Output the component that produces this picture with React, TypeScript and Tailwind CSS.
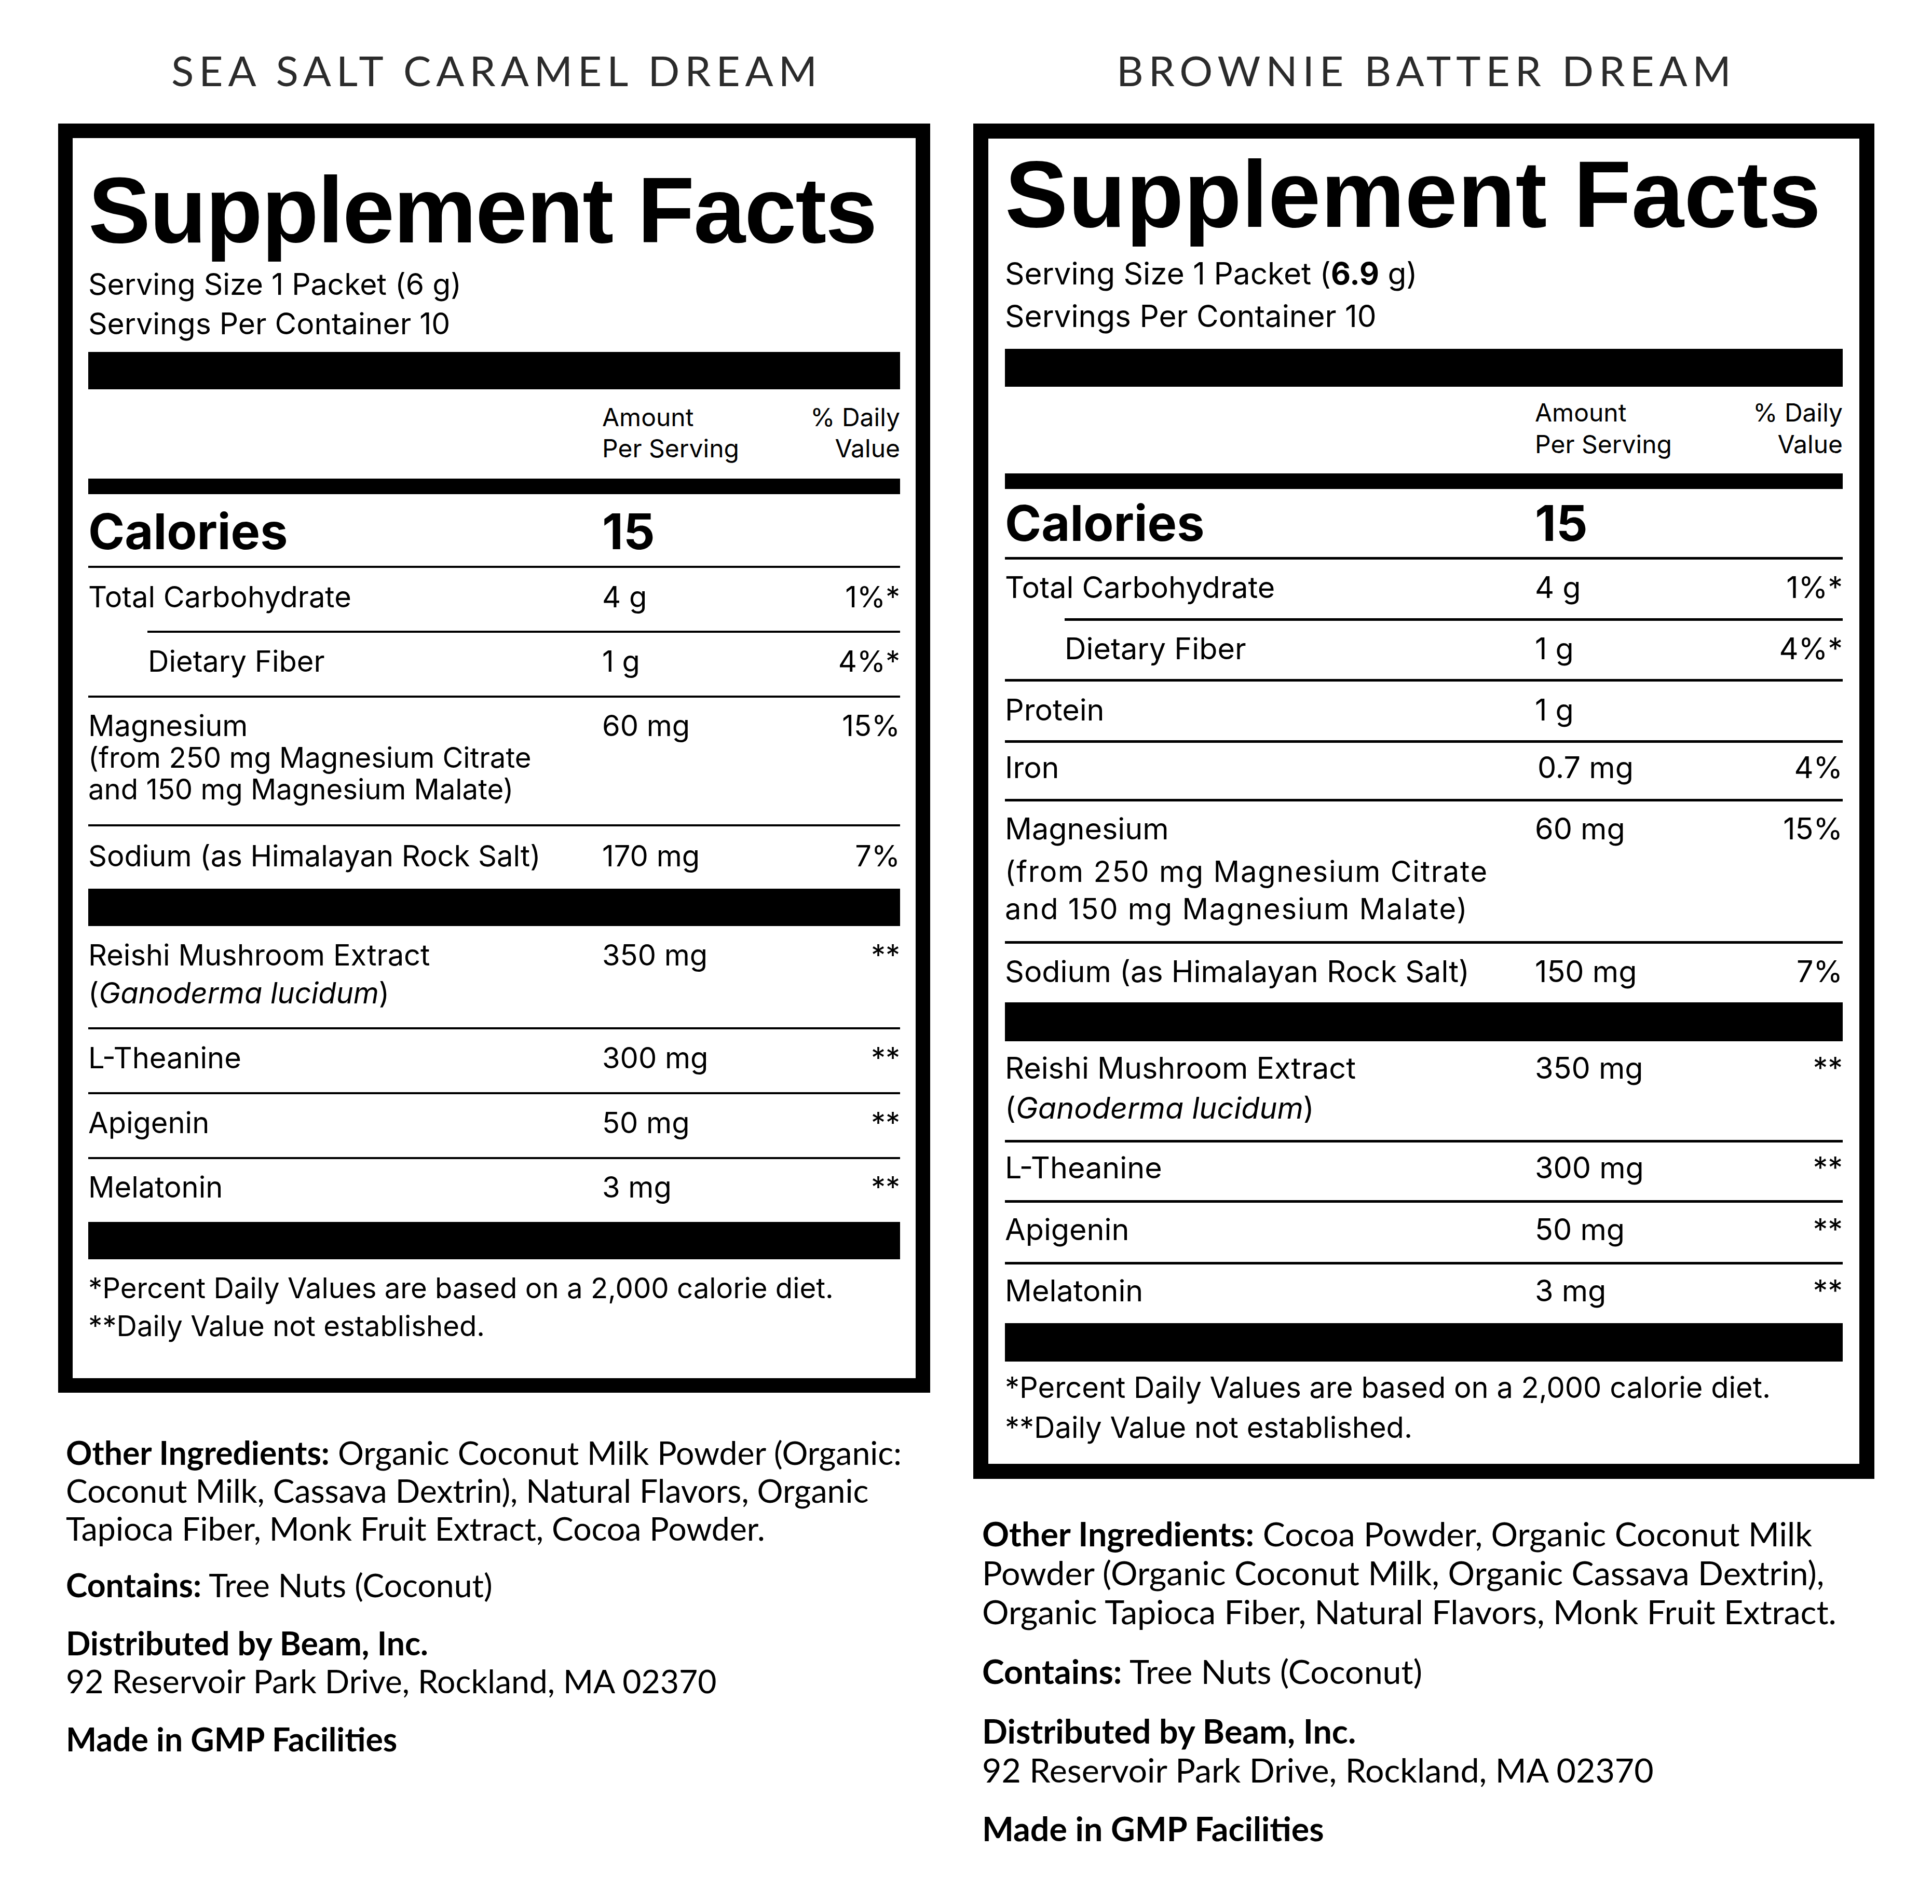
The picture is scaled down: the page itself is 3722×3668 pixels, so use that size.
import type { ReactNode } from "react";

interface RowProps {
    cols: string;
    pad: string;
    lead?: string;
    label: ReactNode;
    amount?: ReactNode;
    dv?: ReactNode;
    indent?: string;
}

const Row = ({ cols, pad, lead = "leading-[60px]", label, amount, dv, indent = "" }: RowProps) => {
    return (
        <div className={`grid ${cols} ${pad} ${lead}`}>
            <div className={indent}>{label}</div>
            <div>{amount}</div>
            <div className="text-right">{dv}</div>
        </div>
    );
};

const Title = ({ children }: { children: ReactNode }) => (
    <h1 className="pl-[10px] text-center font-['Lato',sans-serif] text-[80px] leading-[80px] tracking-[10px] text-[#2b2b2b]">
        {children}
    </h1>
);

// left panel: Sea Salt Caramel
const CaramelLabel = () => {
    const cols = "grid-cols-[990px_1fr_auto]";

    return (
        <div className="w-[1680px] border-[28px] border-black bg-white px-[30px] pt-[49px] pb-[64px] font-['Inter',sans-serif] text-[56px] text-black">
            <h2 className="font-['Liberation_Sans',Arial,sans-serif] text-[180px] leading-[180px] tracking-[-2px] font-bold">
                Supplement Facts
            </h2>
            <div className="mt-[15px] text-[57px] leading-[76px]">
                <p>Serving Size 1 Packet (6 g)</p>
                <p>Servings Per Container 10</p>
            </div>
            <div className="mt-[16px] h-[72px] bg-black" />
            <div className={`grid ${cols} pt-[24px] pb-[28px] text-[48px] leading-[60px]`}>
                <div />
                <div>Amount<br />Per Serving</div>
                <div className="text-right">% Daily<br />Value</div>
            </div>
            <div className="h-[30px] bg-black" />
            <div className={`grid ${cols} pt-[25px] pb-[19px] text-[95px] leading-[94px] font-bold`}>
                <div>Calories</div>
                <div>15</div>
                <div />
            </div>
            <div className="h-[4px] bg-black" />
            <Row cols={cols} pad="pt-[26px] pb-[35px]" label="Total Carbohydrate" amount="4 g" dv="1%*" />
            <div className="ml-[114px] h-[4px] bg-black" />
            <Row cols={cols} pad="pt-[25px] pb-[36px]" indent="pl-[115px]" label="Dietary Fiber" amount="1 g" dv="4%*" />
            <div className="h-[4px] bg-black" />
            <Row
                cols={cols}
                pad="pt-[24px] pb-[37px]"
                lead="leading-[61px]"
                label={
                    <>
                        Magnesium<br />
                        <span className="text-[54.5px]">(from 250 mg Magnesium Citrate<br />and 150 mg Magnesium Malate)</span>
                    </>
                }
                amount="60 mg"
                dv="15%"
            />
            <div className="h-[4px] bg-black" />
            <Row cols={cols} pad="pt-[27px] pb-[33px]" label="Sodium (as Himalayan Rock Salt)" amount="170 mg" dv="7%" />
            <div className="h-[72px] bg-black" />
            <Row
                cols={cols}
                pad="pt-[20px] pb-[29px]"
                lead="leading-[73px]"
                label={<>Reishi Mushroom Extract<br />(<i>Ganoderma lucidum</i>)</>}
                amount="350 mg"
                dv="**"
            />
            <div className="h-[4px] bg-black" />
            <Row cols={cols} pad="pt-[25px] pb-[36px]" label="L-Theanine" amount="300 mg" dv="**" />
            <div className="h-[4px] bg-black" />
            <Row cols={cols} pad="pt-[25px] pb-[36px]" label="Apigenin" amount="50 mg" dv="**" />
            <div className="h-[4px] bg-black" />
            <Row cols={cols} pad="pt-[24px] pb-[37px]" label="Melatonin" amount="3 mg" dv="**" />
            <div className="h-[72px] bg-black" />
            <div className="pt-[19px] text-[54.5px] leading-[73px]">
                <p>*Percent Daily Values are based on a 2,000 calorie diet.</p>
                <p>**Daily Value not established.</p>
            </div>
        </div>
    );
};

// right panel: Brownie Batter
const BrownieLabel = () => {
    const cols = "grid-cols-[1021px_1fr_auto]";

    return (
        <div className="w-[1736px] border-[29px] border-black bg-white px-[32px] pt-[16px] pb-[31px] font-['Inter',sans-serif] text-[57.5px] text-black">
            <h2 className="font-['Liberation_Sans',Arial,sans-serif] text-[182px] leading-[182px] tracking-[0.3px] font-bold">
                Supplement Facts
            </h2>
            <div className="mt-[21px] text-[58.5px] leading-[82px]">
                <p>Serving Size 1 Packet (<b>6.9</b> g)</p>
                <p>Servings Per Container 10</p>
            </div>
            <div className="mt-[22px] h-[73px] bg-black" />
            <div className={`grid ${cols} pt-[19px] pb-[26px] text-[48px] leading-[61px]`}>
                <div />
                <div>Amount<br />Per Serving</div>
                <div className="text-right">% Daily<br />Value</div>
            </div>
            <div className="h-[30px] bg-black" />
            <div className={`grid ${cols} pt-[18px] pb-[18px] text-[95px] leading-[95px] font-bold`}>
                <div>Calories</div>
                <div>15</div>
                <div />
            </div>
            <div className="h-[5px] bg-black" />
            <Row cols={cols} pad="pt-[23px] pb-[30px]" label="Total Carbohydrate" amount="4 g" dv="1%*" />
            <div className="ml-[115px] h-[5px] bg-black" />
            <Row cols={cols} pad="pt-[23px] pb-[29px]" indent="pl-[115px]" label="Dietary Fiber" amount="1 g" dv="4%*" />
            <div className="h-[5px] bg-black" />
            <Row cols={cols} pad="pt-[24px] pb-[29px]" label="Protein" amount="1 g" />
            <div className="h-[5px] bg-black" />
            <Row cols={cols} pad="pt-[17px] pb-[31px]" label="Iron" amount={<span className="pl-[5px]">0.7 mg</span>} dv="4%" />
            <div className="h-[5px] bg-black" />
            <div className={`grid ${cols} pt-[22px] pb-[26px] leading-[60px]`}>
                <div>
                    Magnesium
                    <div className="mt-[17px] text-[56px] leading-[72px] tracking-[1.8px]">
                        (from 250 mg Magnesium Citrate<br />and 150 mg Magnesium Malate)
                    </div>
                </div>
                <div>60 mg</div>
                <div className="text-right">15%</div>
            </div>
            <div className="h-[5px] bg-black" />
            <Row cols={cols} pad="pt-[23px] pb-[30px]" label="Sodium (as Himalayan Rock Salt)" amount="150 mg" dv="7%" />
            <div className="h-[75px] bg-black" />
            <Row
                cols={cols}
                pad="pt-[13px] pb-[23px]"
                lead="leading-[77px]"
                label={<>Reishi Mushroom Extract<br />(<i>Ganoderma lucidum</i>)</>}
                amount="350 mg"
                dv="**"
            />
            <div className="h-[5px] bg-black" />
            <Row cols={cols} pad="pt-[18px] pb-[33px]" label="L-Theanine" amount="300 mg" dv="**" />
            <div className="h-[5px] bg-black" />
            <Row cols={cols} pad="pt-[21px] pb-[33px]" label="Apigenin" amount="50 mg" dv="**" />
            <div className="h-[5px] bg-black" />
            <Row cols={cols} pad="pt-[20px] pb-[33px]" label="Melatonin" amount="3 mg" dv="**" />
            <div className="h-[74px] bg-black" />
            <div className="pt-[12px] text-[56px] leading-[77px]">
                <p>*Percent Daily Values are based on a 2,000 calorie diet.</p>
                <p>**Daily Value not established.</p>
            </div>
        </div>
    );
};

const App = () => {
    return (
        <div className="flex min-h-[3668px] w-[3722px] gap-[83px] bg-white px-[112px] pt-[95px] text-black">
            <div className="w-[1680px] shrink-0">
                <Title>SEA SALT CARAMEL DREAM</Title>
                <div className="mt-[63px]">
                    <CaramelLabel />
                </div>
                <div className="mt-[78px] pl-[15px] font-['Lato',sans-serif] text-[62.5px] leading-[73px]">
                    <p>
                        <b>Other Ingredients:</b> Organic Coconut Milk Powder (Organic:<br />
                        Coconut Milk, Cassava Dextrin), Natural Flavors, Organic<br />
                        Tapioca Fiber, Monk Fruit Extract, Cocoa Powder.
                    </p>
                    <p className="mt-[36px]"><b>Contains:</b> Tree Nuts (Coconut)</p>
                    <p className="mt-[39px]">
                        <b>Distributed by Beam, Inc.</b><br />
                        92 Reservoir Park Drive, Rockland, MA 02370
                    </p>
                    <p className="mt-[39px] font-bold">Made in GMP Facilities</p>
                </div>
            </div>
            <div className="w-[1736px] shrink-0">
                <Title>BROWNIE BATTER DREAM</Title>
                <div className="mt-[63px]">
                    <BrownieLabel />
                </div>
                <div className="mt-[68px] pl-[17px] font-['Lato',sans-serif] text-[64.5px] leading-[75px]">
                    <p>
                        <b>Other Ingredients:</b> Cocoa Powder, Organic Coconut Milk<br />
                        Powder (Organic Coconut Milk, Organic Cassava Dextrin),<br />
                        Organic Tapioca Fiber, Natural Flavors, Monk Fruit Extract.
                    </p>
                    <p className="mt-[40px]"><b>Contains:</b> Tree Nuts (Coconut)</p>
                    <p className="mt-[40px]">
                        <b>Distributed by Beam, Inc.</b><br />
                        92 Reservoir Park Drive, Rockland, MA 02370
                    </p>
                    <p className="mt-[38px] font-bold">Made in GMP Facilities</p>
                </div>
            </div>
        </div>
    );
};

export default App;
